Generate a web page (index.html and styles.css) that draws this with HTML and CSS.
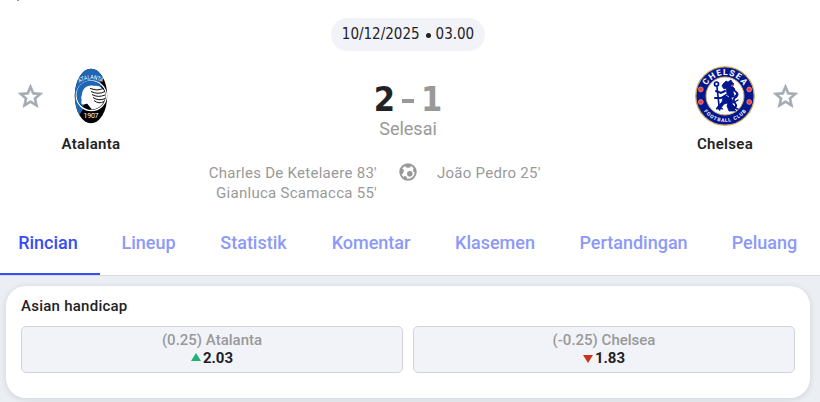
FILE: index.html
```html
<!DOCTYPE html>
<html lang="id">
<head>
  <meta charset="UTF-8" />
  <meta name="viewport" content="width=device-width, initial-scale=1.0" />
  <title>Atalanta - Chelsea</title>
  <link rel="stylesheet" href="styles.css">
</head>
<body>
  <header class="match">
    <i class="tick"></i>
    <div class="date"><span>10/12/2025</span><i class="dot"></i><span>03.00</span></div>

    <div class="teams">
      <svg class="star" viewBox="0 0 24 24"><path d="M22 9.24l-7.19-.62L12 2 9.19 8.63 2 9.24l5.46 4.73L5.82 21 12 17.27 18.18 21l-1.63-7.03L22 9.24zM12 15.4l-3.76 2.27 1-4.28-3.32-2.88 4.38-.38L12 6.1l1.71 4.04 4.38.38-3.32 2.88 1 4.28L12 15.4z"/></svg>
      <div class="team">
        <svg class="crest" viewBox="0 0 60 60">
          <defs>
            <clipPath id="oval"><ellipse cx="30" cy="30" rx="16.2" ry="27.2"/></clipPath>
            <path id="ataTop" d="M18.500 16.800Q30 9.500 42 16.800"/>
          </defs>
          <g clip-path="url(#oval)">
            <path d="M0 0H60V60H0z" fill="#000"/>
            <path d="M0 0H50L19 48H0z" fill="#1f66b5"/>
            <ellipse cx="30.400" cy="29.700" rx="15" ry="14.800" fill="#000" stroke="#fff" stroke-width="1.300"/>
            <path d="M40.500 20A14 14 0 1 0 22 40.500L32 31z" fill="#1f66b5"/>
          </g>
          <path d="M20.500 33C19.500 31 21 30 21 28C22 21 28 18.500 33 20C38 19 43 22 44.500 28C45 35 40 43 31 43.500L26 38L21 38.500C19.500 37 21 35 20.500 33z" fill="#fff"/>
          <path d="M29 22.500q7 3 14 0M30 25.500q7 3.500 14 0M31 28.500q6 3.500 13 .5M32 31.500q6 4 12 1M33 34.500q5 4 10 1" fill="none" stroke="#111" stroke-width="1"/>
          <path d="M22 39.500l4-2 4.500 6z" fill="#000"/>
          <text class="crest-text" font-size="6"><textPath href="#ataTop" textLength="24" lengthAdjust="spacingAndGlyphs">ATALANTA</textPath></text>
          <text class="crest-text" x="30" y="51.500" font-size="7" text-anchor="middle" textLength="15">1907</text>
        </svg>
        <span class="team-name">Atalanta</span>
      </div>

      <div class="result">
        <div class="score"><b>2</b><span class="dash"></span><span>1</span></div>
        <div class="status">Selesai</div>
      </div>

      <div class="team">
        <svg class="crest" viewBox="0 0 60 60">
          <defs>
            <path id="cheTop" d="M9 30A21 21 0 0 1 51 30"/>
            <path id="cheBottom" d="M4 30A26 26 0 0 0 56 30"/>
          </defs>
          <circle cx="30" cy="30" r="29.200" fill="#02168f" stroke="#c9a557" stroke-width="1.300"/>
          <circle cx="30" cy="30" r="19" fill="#fff" stroke="#d0ad62" stroke-width="1"/>
          <text class="crest-text heavy" font-size="8.500"><textPath href="#cheTop" startOffset="50%" text-anchor="middle" textLength="44">CHELSEA</textPath></text>
          <text class="crest-text heavy" font-size="5"><textPath href="#cheBottom" startOffset="50%" text-anchor="middle" textLength="49">FOOTBALL CLUB</textPath></text>
          <g fill="#e8424d" stroke="#f08b79" stroke-width=".8">
            <circle cx="5.800" cy="23.500" r="2.400"/><circle cx="5.800" cy="36" r="2.400"/>
            <circle cx="54.200" cy="23.500" r="2.400"/><circle cx="54.200" cy="36" r="2.400"/>
          </g>
          <!-- lion with staff -->
          <circle cx="21.500" cy="18" r="2" fill="none" stroke="#02168f" stroke-width="1.700"/>
          <g fill="none" stroke="#02168f" stroke-linecap="round">
            <path d="M22 21L24.500 44" stroke-width="1.700"/>
            <path d="M21 25l5 2 4-2M20 32l6 0 5-3M38 43q5-2 2-6t1-6q3-3 0-5t-3-4" stroke-width="2"/>
            <path d="M37 31q5-1 5-4M38 37l5-3M39 42l4 1" stroke-width="1.300"/>
          </g>
          <path d="M28 18l3-3 2 1 3-2 1 2 2 2-2 2 3 3-2 3 1 3-3 3 2 3-1 3 4 4-2 1 2 2h-7l-2-5 1-3-4 1-3 4 2 1h-7l2-3 4-4 1-5 4-3-1-6-2 1-2-3z" fill="#02168f" stroke="#02168f" stroke-width=".8"/>
          <path d="M36 20l3-1" stroke="#e8424d" stroke-width="1.500"/>
          <path d="M31 29l3 2" stroke="#fff" stroke-width=".7"/>
        </svg>
        <span class="team-name">Chelsea</span>
      </div>
      <svg class="star" viewBox="0 0 24 24"><path d="M22 9.24l-7.19-.62L12 2 9.19 8.63 2 9.24l5.46 4.73L5.82 21 12 17.27 18.18 21l-1.63-7.03L22 9.24zM12 15.4l-3.76 2.27 1-4.28-3.32-2.88 4.38-.38L12 6.1l1.71 4.04 4.38.38-3.32 2.88 1 4.28L12 15.4z"/></svg>
    </div>

    <div class="scorers">
      <div class="home"><span>Charles De Ketelaere 83'</span><span>Gianluca Scamacca 55'</span></div>
      <svg class="ball" viewBox="0 0 18 18">
        <circle cx="9" cy="9" r="7.700" fill="#fff" stroke="#999" stroke-width="2"/>
        <g fill="#999">
          <circle cx="10.800" cy="10.700" r="2.800"/>
          <path d="M5.500 2L11 1l1.500 1.500-2 2.200-3.500-.2zM1 7l3-1.500L5 8l-1.500 3L1.500 11zM16.500 5l-2.500 1 .3 2.800 2.700 1zM5 13l2.500.5.7 3.500L5 15.500z"/>
        </g>
      </svg>
      <div class="away">João Pedro 25'</div>
    </div>

    <nav class="tabs">
      <a class="tab active">Rincian</a>
      <a class="tab">Lineup</a>
      <a class="tab">Statistik</a>
      <a class="tab">Komentar</a>
      <a class="tab">Klasemen</a>
      <a class="tab">Pertandingan</a>
      <a class="tab">Peluang</a>
    </nav>
  </header>

  <section class="card">
    <h2>Asian handicap</h2>
    <div class="odds">
      <div class="odd">
        <span class="label">(0.25) Atalanta</span>
        <span class="value"><i class="up"></i>2.03</span>
      </div>
      <div class="odd">
        <span class="label">(-0.25) Chelsea</span>
        <span class="value"><i class="down"></i>1.83</span>
      </div>
    </div>
  </section>
</body>
</html>
```

FILE: styles.css
```css
:root {
  --text: #222226;
  --muted: #999;
  --accent: #374df5;
  --accent-light: #8c99fa;
  --surface: #f2f3f8;
}

* {
  box-sizing: border-box;
  margin: 0;
  padding: 0;
}

body {
  font-family: Roboto, sans-serif;
  font-size: 15px;
  color: var(--text);
  background: #ebeef3;
  height: 402px;
  overflow: hidden;
}

.match {
  background: #fff;
  height: 276px;
  border-bottom: 1px solid #d8dade;
}

.tick {
  display: block;
  width: 2px;
  height: 1px;
  margin: 0 0 17px 17px;
  background: #8f96a8;
}

.date {
  display: flex;
  align-items: center;
  justify-content: center;
  width: 154px;
  height: 33px;
  margin: 0 auto 0 331px;
  padding-bottom: 1px;
  border-radius: 17px;
  background: var(--surface);
  font-family: "DejaVu Sans Condensed", "DejaVu Sans", sans-serif;
  font-stretch: condensed;
  font-size: 15px;
}
.dot {
  width: 5px;
  height: 5px;
  margin: 2px 5px 0 6px;
  border-radius: 50%;
  background: var(--text);
}

/* Teams and result */
.teams {
  display: flex;
  align-items: flex-start;
  height: 111px;
  padding: 15px 20px 0 16px;
}
.star {
  width: 29px;
  height: 29px;
  margin-top: 16px;
  fill: #a4a9b3;
  stroke: #a4a9b3;
  stroke-width: 0.6;
}
.team {
  display: flex;
  flex-direction: column;
  align-items: center;
  width: 92px;
}
.crest {
  width: 60px;
  height: 60px;
}
.crest-text {
  font-family: Roboto, sans-serif;
  fill: #fff;
}
.heavy {
  font-weight: 700;
}
.team-name {
  margin-top: 8px;
  font-weight: 600;
  line-height: 20px;
  letter-spacing: 0.3px;
}
.result {
  flex: 1;
  text-align: center;
}
.score {
  display: flex;
  align-items: center;
  justify-content: center;
  height: 36px;
  margin-top: 15px;
  gap: 7px;
  font-family: "DejaVu Sans Condensed", "DejaVu Sans", sans-serif;
  font-stretch: condensed;
  font-size: 34px;
  font-weight: 700;
  color: var(--muted);
}
.score b {
  color: var(--text);
}
.dash {
  width: 12px;
  height: 4px;
  margin-top: 4px;
  background: var(--muted);
}
.status {
  font-size: 18px;
  line-height: 24px;
  color: var(--muted);
}

.scorers {
  display: flex;
  height: 60px;
  padding-top: 1px;
  line-height: 20px;
  letter-spacing: 0.27px;
  color: var(--muted);
}
.home {
  display: flex;
  flex-direction: column;
  align-items: flex-end;
  width: 377px;
}
.ball {
  width: 18px;
  height: 18px;
  margin: 0 20px 0 22px;
}

/* Tabs */
.tabs {
  display: grid;
  grid-template-columns: 100px 97px 113px 122px 126px 151px 111px;
  height: 53px;
}
.tab {
  display: flex;
  justify-content: center;
  padding-top: 9px;
  font-size: 18px;
  font-weight: 500;
  line-height: 24px;
  color: var(--accent-light);
}
.tab.active {
  padding-right: 4px;
  color: var(--accent);
  border-bottom: 2px solid var(--accent);
}

/* Odds */
.card {
  width: 804px;
  height: 112px;
  margin: 10px 0 0 6px;
  padding: 10px 15px;
  border-radius: 20px;
  background: #fff;
  box-shadow: 0 1px 6px rgba(34, 34, 60, 0.14);
}
.card h2 {
  font-size: 15px;
  font-weight: 500;
  line-height: 20px;
  letter-spacing: 0.25px;
}
.odds {
  display: grid;
  grid-template-columns: 1fr 1fr;
  gap: 10px;
  margin-top: 10px;
}
.odd {
  display: flex;
  flex-direction: column;
  align-items: center;
  height: 47px;
  padding-top: 4px;
  border: 1px solid #d1d2da;
  border-radius: 5px;
  background: var(--surface);
  line-height: 18px;
}
.label {
  font-weight: 500;
  color: var(--muted);
}
.value {
  display: flex;
  align-items: center;
  gap: 2px;
  font-weight: 700;
}
.up,
.down {
  border: 5px solid transparent;
  border-top-width: 0;
  border-bottom: 8px solid #1db573;
}
.up {
  margin-top: -2px;
}
.down {
  margin-top: 2px;
  border-top: 8px solid #c9341f;
  border-bottom-width: 0;
}
```
